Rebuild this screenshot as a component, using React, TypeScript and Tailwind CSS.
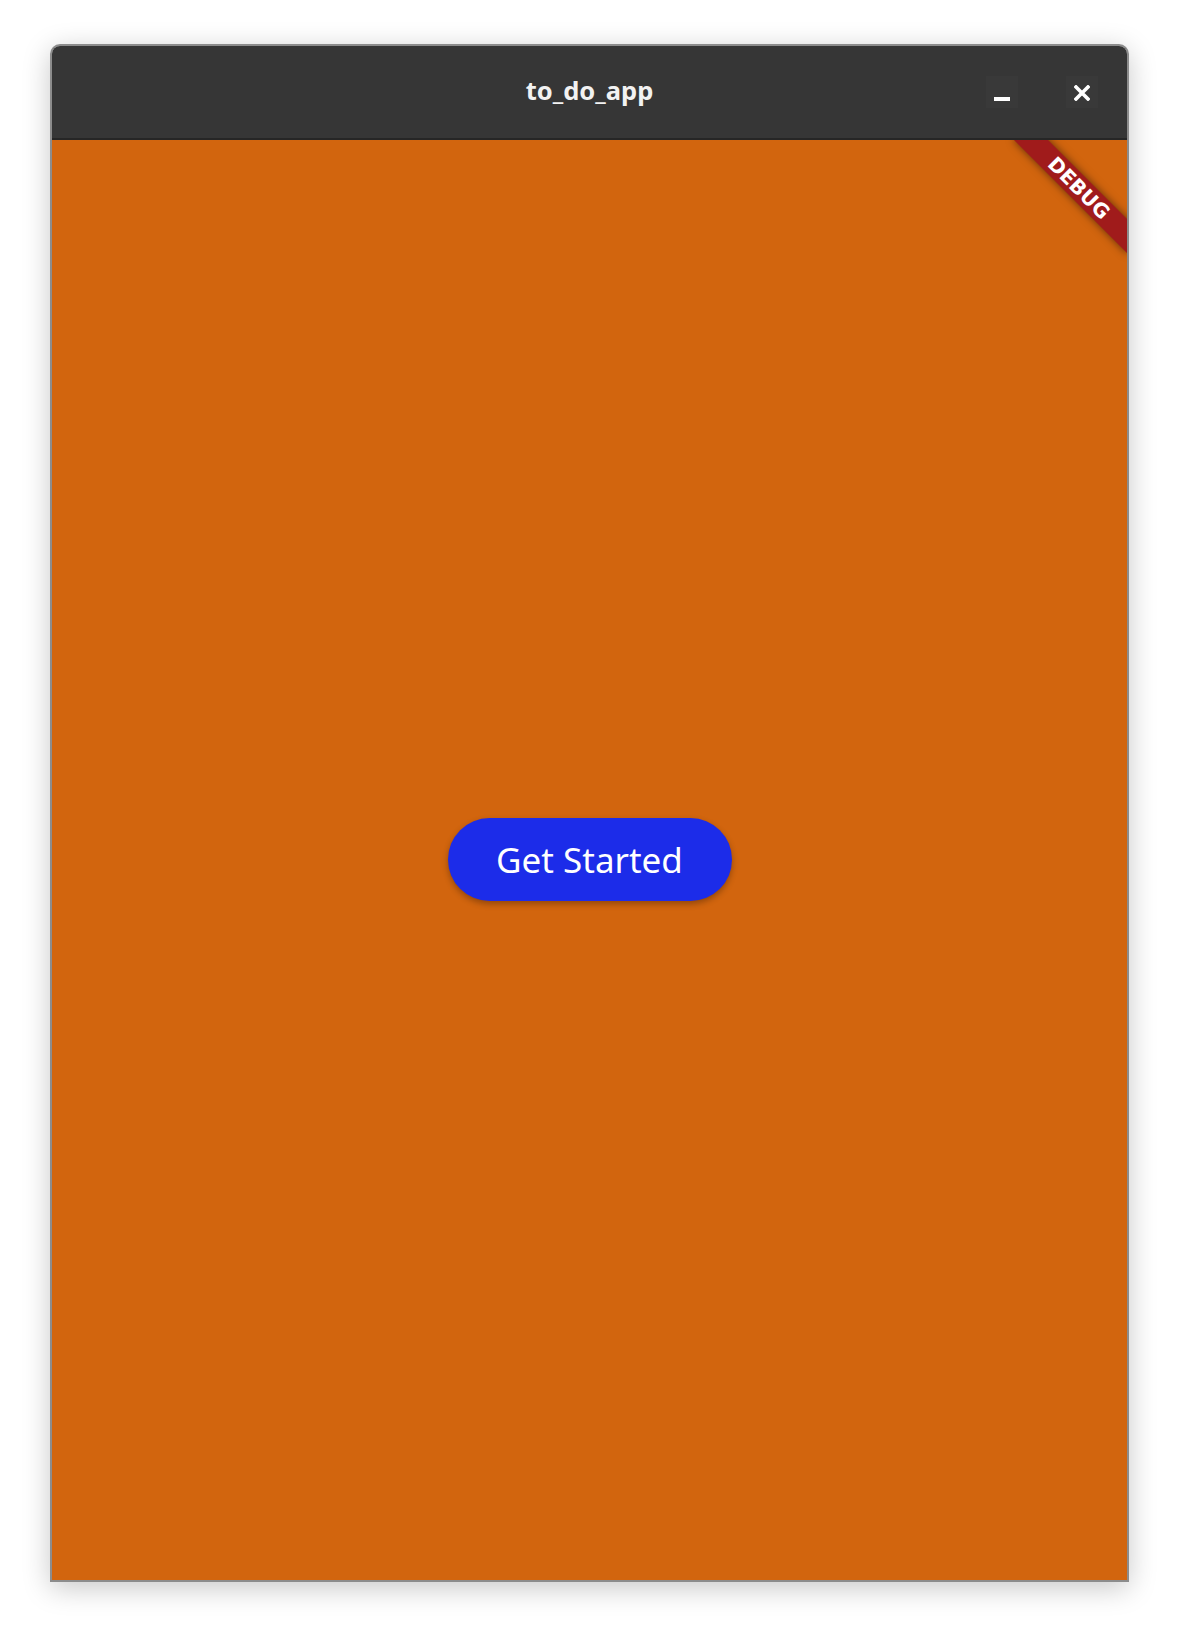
import React from "react";

export default function App() {
  return (
    <div className="min-h-[1638px] w-full bg-white pt-[44px] pl-[50px]">
      <div className="w-[1079px] h-[1538px] flex flex-col border-2 border-[#8c8c8c] rounded-t-[10px] overflow-hidden shadow-[0_6px_28px_rgba(0,0,0,0.22)]">
        {/* Title bar */}
        <div className="h-[92px] flex items-center bg-[#363636] shrink-0">
          <div className="w-[141px] shrink-0" />
          <div
            className="flex-1 text-center text-[25.5px] font-bold text-[#f2f2f2] leading-none pb-[3px]"
            style={{ fontFamily: '"Noto Sans", "DejaVu Sans", sans-serif' }}
          >
            to_do_app
          </div>
          <div className="w-[141px] shrink-0 flex items-center gap-[48px] pr-[29px] pb-[1px]">
            <div className="w-[32px] h-[32px] bg-[#393939] flex items-end justify-center pb-[7px]">
              <div className="w-[16px] h-[4px] bg-white" />
            </div>
            <div className="w-[32px] h-[32px] bg-[#393939] flex items-center justify-center pt-[2px]">
              <svg width="16" height="16" viewBox="0 0 16 16">
                <path d="M2 2 L14 14 M14 2 L2 14" stroke="white" strokeWidth="3.6" strokeLinecap="square" />
              </svg>
            </div>
          </div>
        </div>
        <div className="h-[2px] bg-[#262626] shrink-0" />
        {/* Content */}
        <div className="relative flex-1 bg-[#d2650e] flex items-center justify-center">
          <button
            className="w-[284px] h-[83px] rounded-full bg-[#1c2ce9] text-white text-[35px] leading-none shadow-[0_3px_6px_rgba(0,0,0,0.3)] mt-[-1px]"
            style={{ fontFamily: '"Noto Sans", "Open Sans", sans-serif' }}
          >
            Get Started
          </button>
          {/* Debug banner */}
          <div className="absolute top-0 right-0 w-[130px] h-[130px] overflow-hidden pointer-events-none">
            <div className="absolute left-[2px] top-[36px] w-[160px] h-[24px] bg-[#a01b1b] rotate-45 flex items-center justify-center shadow-[0_0_8px_rgba(0,0,0,0.55)]">
              <span
                className="text-white text-[20px] font-black leading-none"
                style={{ fontFamily: '"DejaVu Sans", "Noto Sans", sans-serif' }}
              >
                DEBUG
              </span>
            </div>
          </div>
        </div>
      </div>
    </div>
  );
}
